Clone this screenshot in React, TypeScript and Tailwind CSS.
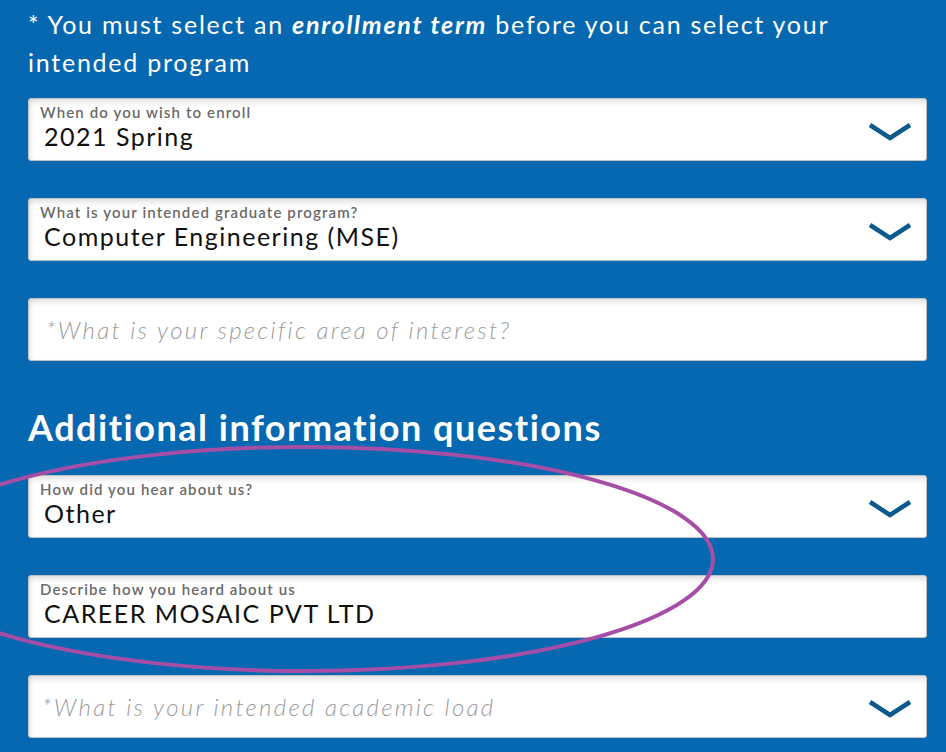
import React from 'react';

type FieldProps = {
  label?: string;
  value?: string;
  placeholder?: string;
  select?: boolean;
  padLeft?: string;
};

function Chevron() {
  return (
    <svg width="44" height="19" viewBox="0 0 44 19" className="mt-[3px] shrink-0">
      <path d="M2 3 L22 16 L42 3" fill="none" stroke="#0b5a8b" strokeWidth="4.5" strokeLinejoin="miter" />
    </svg>
  );
}

function Field({ label, value, placeholder, select, padLeft = 'pl-[15px]' }: FieldProps) {
  return (
    <div className="flex h-[63px] items-center rounded-[3px] border border-[#c2c2c2] bg-white pr-[14px] shadow-[inset_0_5px_6px_-2px_rgba(0,0,0,0.13),inset_3px_0_5px_-3px_rgba(0,0,0,0.15)]">
      {label ? (
        <div className="flex flex-1 flex-col self-start pt-[5px]">
          <span className="pl-[11px] text-[15px] font-semibold leading-[16px] tracking-[0.075em] text-[#6a6a6a]">
            {label}
          </span>
          <span className="mt-[1px] pl-[15px] text-[25px] leading-[30px] tracking-[0.06em] text-[#111]">{value}</span>
        </div>
      ) : (
        <span className={`flex-1 ${padLeft} text-[24px] font-light italic tracking-[0.095em] text-[#9c9c9c]`}>
          {placeholder}
        </span>
      )}
      {select && <Chevron />}
    </div>
  );
}

export default function App() {
  return (
    <div
      className="relative h-[752px] w-[946px] overflow-hidden bg-[#0668b0] pl-[28px] pr-[19px] pt-[5px]"
      style={{ fontFamily: 'Lato, "Open Sans", sans-serif' }}
    >
      <div className="text-[25px] leading-[38px] tracking-[0.07em] text-white">
        <p className="whitespace-nowrap">
          * You must select an <b className="font-bold italic">enrollment term</b> before you can select your
        </p>
        <p>intended program</p>
      </div>

      <div className="mt-[17px] flex flex-col gap-[37px]">
        <Field label="When do you wish to enroll" value="2021 Spring" select />
        <Field label="What is your intended graduate program?" value="Computer Engineering (MSE)" select />
        <Field placeholder="*What is your specific area of interest?" padLeft="pl-[17px]" />
      </div>

      <h2 className="mt-[46px] mb-[27px] text-[36px] font-bold leading-[41px] tracking-[0.042em] text-white">
        Additional information questions
      </h2>

      <div className="flex flex-col gap-[37px]">
        <Field label="How did you hear about us?" value="Other" select />
        <Field label="Describe how you heard about us" value="CAREER MOSAIC PVT LTD" />
        <Field placeholder="*What is your intended academic load" padLeft="pl-[13px]" select />
      </div>

      <svg className="pointer-events-none absolute inset-0" width="946" height="752" viewBox="0 0 946 752">
        <ellipse cx="305" cy="559" rx="408" ry="112" fill="none" stroke="#a64ea6" strokeWidth="4" />
      </svg>
    </div>
  );
}
